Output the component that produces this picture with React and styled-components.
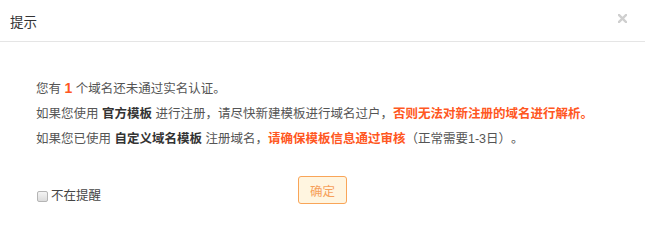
import React from "react";
import styled, { createGlobalStyle } from "styled-components";

const GlobalStyle = createGlobalStyle`
  html, body {
    margin: 0;
    padding: 0;
    background: #fff;
  }
  body {
    font-family: "Liberation Sans", Arial, "Noto Sans CJK SC", sans-serif;
    text-spacing-trim: space-all;
  }
`;

const Dialog = styled.div`
  width: 645px;
  height: 239px;
  background: #fff;
  display: flex;
  flex-direction: column;
`;

const Header = styled.div`
  height: 41px;
  border-bottom: 1px solid #e5e5e5;
  display: flex;
  align-items: center;
  justify-content: space-between;
  padding: 0 18px 0 10px;
`;

const Title = styled.span`
  font-size: 13.5px;
  color: #333;
`;

const Close = styled.button`
  border: 0;
  background: none;
  padding: 0;
  width: 9px;
  height: 9px;
  margin-top: -5px;
  display: flex;
  cursor: pointer;
`;

const Body = styled.div`
  padding: 34px 37px 0 36px;
  font-size: 12.5px;
  line-height: 25px;
  color: #555;
`;

const Line = styled.p`
  margin: 0;
  white-space: nowrap;
`;

const Strong = styled.b`
  font-weight: 700;
  color: ${(p) => (p.$warn ? "#ff5722" : "#333")};
  font-size: ${(p) => (p.$big ? "14px" : "inherit")};
`;

const Footer = styled.div`
  display: grid;
  grid-template-columns: 1fr auto 1fr;
  align-items: end;
  padding: 24px 37px 0;
`;

const Remember = styled.label`
  display: flex;
  align-items: center;
  gap: 3px;
  font-size: 12.5px;
  color: #444;
  line-height: 16px;
`;

const Check = styled.input`
  appearance: none;
  margin: 0;
  width: 11px;
  height: 11px;
  border: 1px solid #b5b5b5;
  border-radius: 2px;
  background: linear-gradient(#f4f4f4, #dcdcdc);
`;

const OkButton = styled.button`
  width: 49px;
  height: 28px;
  border: 1px solid #f9a558;
  border-radius: 3px;
  background: #fff5e0;
  color: #f6a05a;
  font-size: 12.5px;
  font-family: inherit;
  padding: 0;
  cursor: pointer;
`;

export default function App() {
  return (
    <>
      <GlobalStyle />
      <Dialog>
        <Header>
          <Title>提示</Title>
          <Close aria-label="关闭">
            <svg width="9" height="9" viewBox="0 0 10 10">
              <path d="M1 1L9 9M9 1L1 9" stroke="#cfcfcf" strokeWidth="2.6" strokeLinecap="square" />
            </svg>
          </Close>
        </Header>
        <Body>
          <Line>
            您有 <Strong $warn $big>1</Strong> 个域名还未通过实名认证。
          </Line>
          <Line>
            如果您使用 <Strong>官方模板</Strong> 进行注册，请尽快新建模板进行域名过户，
            <Strong $warn>否则无法对新注册的域名进行解析。</Strong>
          </Line>
          <Line>
            如果您已使用 <Strong>自定义域名模板</Strong> 注册域名，
            <Strong $warn>请确保模板信息通过审核</Strong>（正常需要1-3日）。
          </Line>
        </Body>
        <Footer>
          <Remember>
            <Check type="checkbox" />
            不在提醒
          </Remember>
          <OkButton>确定</OkButton>
          <span />
        </Footer>
      </Dialog>
    </>
  );
}
